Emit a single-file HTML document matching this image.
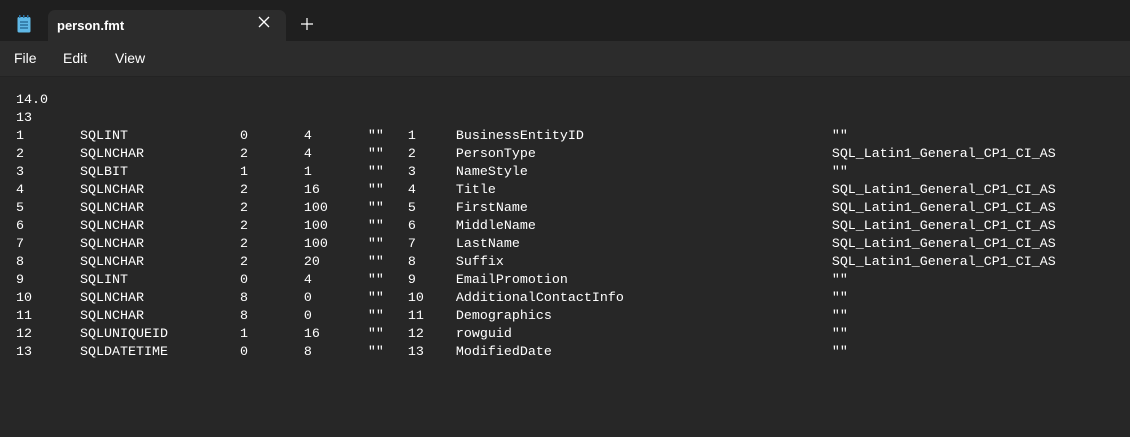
<!DOCTYPE html>
<html><head><meta charset="utf-8"><style>
html,body{margin:0;padding:0;width:1130px;height:437px;overflow:hidden;background:#272727;font-family:"Liberation Sans",sans-serif;}
.title{position:absolute;left:0;top:0;width:1130px;height:41px;background:#1f1f1f;}
.tab{position:absolute;left:48px;top:10px;width:238px;height:31px;background:#2c2c2c;border-radius:7px 7px 0 0;}
.tab .t{position:absolute;left:9px;top:8px;color:#fff;font-size:13px;font-weight:bold;}
.x{position:absolute;left:258px;top:16px;}
.plus{position:absolute;left:301px;top:18px;}
.menu{position:absolute;left:0;top:41px;width:1130px;height:35px;background:#2c2c2c;border-bottom:1px solid #232323;}
.menu span{position:absolute;top:9px;color:#fff;font-size:14px;}
pre{position:absolute;left:16px;top:92px;margin:0;font-family:"Liberation Mono",monospace;font-size:13.333px;line-height:18px;color:#fff;}
</style></head><body>
<div class="title">
<svg style="position:absolute;left:17px;top:15px" width="14" height="18" viewBox="0 0 14 18"><rect x="0.5" y="2" width="13" height="15.5" rx="1.5" fill="#5fb8e6"/><rect x="2" y="0" width="1.5" height="3" fill="#2a6e9c"/><rect x="6" y="0" width="1.5" height="3" fill="#2a6e9c"/><rect x="10" y="0" width="1.5" height="3" fill="#2a6e9c"/><g stroke="#1f5f8a" stroke-width="1.2"><line x1="3" y1="7" x2="11" y2="7"/><line x1="3" y1="10" x2="11" y2="10"/><line x1="3" y1="13" x2="11" y2="13"/></g></svg>
<div class="tab"><span class="t">person.fmt</span></div>
<svg class="x" width="12" height="12" viewBox="0 0 12 12"><path d="M1 1L11 11M11 1L1 11" stroke="#fff" stroke-width="1.3"/></svg>
<svg class="plus" width="12" height="12" viewBox="0 0 12 12"><path d="M6 0V12M0 6H12" stroke="#fff" stroke-width="1.2"/></svg>
</div>
<div class="menu"><span style="left:14px">File</span><span style="left:63px">Edit</span><span style="left:115px">View</span></div>
<pre>14.0
13
1       SQLINT              0       4       ""   1     BusinessEntityID                               ""
2       SQLNCHAR            2       4       ""   2     PersonType                                     SQL_Latin1_General_CP1_CI_AS
3       SQLBIT              1       1       ""   3     NameStyle                                      ""
4       SQLNCHAR            2       16      ""   4     Title                                          SQL_Latin1_General_CP1_CI_AS
5       SQLNCHAR            2       100     ""   5     FirstName                                      SQL_Latin1_General_CP1_CI_AS
6       SQLNCHAR            2       100     ""   6     MiddleName                                     SQL_Latin1_General_CP1_CI_AS
7       SQLNCHAR            2       100     ""   7     LastName                                       SQL_Latin1_General_CP1_CI_AS
8       SQLNCHAR            2       20      ""   8     Suffix                                         SQL_Latin1_General_CP1_CI_AS
9       SQLINT              0       4       ""   9     EmailPromotion                                 ""
10      SQLNCHAR            8       0       ""   10    AdditionalContactInfo                          ""
11      SQLNCHAR            8       0       ""   11    Demographics                                   ""
12      SQLUNIQUEID         1       16      ""   12    rowguid                                        ""
13      SQLDATETIME         0       8       ""   13    ModifiedDate                                   ""</pre>
</body></html>
